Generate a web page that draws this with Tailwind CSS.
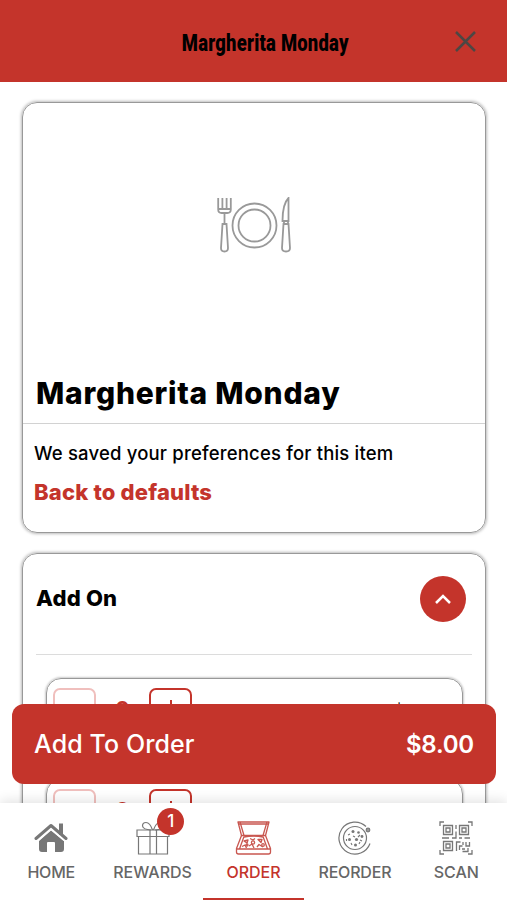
<!DOCTYPE html>
<html lang="en">
  <head>
    <meta charset="UTF-8" />
    <meta name="viewport" content="width=device-width, initial-scale=1.0" />
    <title>Margherita Monday</title>
    <script src="https://cdn.jsdelivr.net/npm/@tailwindcss/browser@4"></script>
  </head>
  <body class="bg-white font-['Inter',sans-serif] text-black">
    <div class="relative h-[900px] w-full overflow-hidden">
      <header class="relative flex h-[82px] items-center justify-center bg-[#c4342b] pl-[23px] pt-[6px]">
        <h1 class="origin-center scale-x-[0.8] whitespace-nowrap font-['Roboto',sans-serif] text-[23px] font-black tracking-[0.3px]">Margherita Monday</h1>
        <button type="button" aria-label="Close" class="absolute right-[31px] top-[31px] text-[#4d4744]">
          <svg class="size-[21px]" viewBox="0 0 21 21" fill="none" stroke="currentColor" stroke-width="2.500">
            <path d="M1 1l19 19M20 1L1 20" />
          </svg>
        </button>
      </header>

      <main class="flex flex-col gap-5 px-[22px] pt-5 pr-[21px]">
        <section class="h-[431px] rounded-[15px] border border-[#999] shadow-[0_0_3px_1px_#bbb]">
          <div class="flex h-[260px] items-center justify-center pl-[2px]">
            <svg class="mt-[-17px] h-[56px] w-[76px]" viewBox="0 0 76 56" fill="none" stroke="#999" stroke-width="1.8">
              <circle cx="37.500" cy="28.500" r="22" />
              <circle cx="37.500" cy="28.500" r="16" />
              <path d="M1.200 1v11.500q0 3.500 3.500 3.500h5.600q3.500 0 3.500-3.500V1M5.400 1v11M9.600 1v11M1.200 12h12.600M7.500 16v10.500M5.500 27h4l1.500 24q0 3.500-3.500 3.500T4 51z" />
              <path d="M71.500 24V1q-6 6-6 23zM67 24v3M71 24v3M66.500 27h5l1.500 24q0 3.500-4 3.500T65 51z" />
            </svg>
          </div>
          <div class="flex h-[61px] items-center border-b border-[#d2d2d2] pl-[13px]">
            <h2 class="whitespace-nowrap text-[30px] font-extrabold tracking-[0.75px]">Margherita Monday</h2>
          </div>
          <div class="flex flex-col items-start gap-[11px] pl-[11px] pt-[15px]">
            <p class="whitespace-nowrap text-[18.500px] font-medium leading-7 tracking-[0.18px]">We saved your preferences for this item</p>
            <button type="button" class="whitespace-nowrap text-[22px] font-extrabold leading-7 tracking-[0.18px] text-[#c4342b]">Back to defaults</button>
          </div>
        </section>

        <section class="h-[400px] rounded-[15px] border border-[#999] px-[13px] shadow-[0_0_3px_1px_#bbb]">
          <div class="flex h-[101px] items-center justify-between border-b border-[#dcdcdc] pb-[11px] pr-[6px]">
            <h3 class="whitespace-nowrap text-[22px] font-extrabold tracking-[0.2px]">Add On</h3>
            <button type="button" aria-label="Collapse" class="flex size-[46px] items-center justify-center rounded-full bg-[#c4342b]">
              <svg class="h-[10px] w-4" viewBox="0 0 16 10" fill="none" stroke="#fff" stroke-width="2.500">
                <path d="M1 9l7-7 7 7" />
              </svg>
            </button>
          </div>
          <div class="flex flex-col gap-[11px] pl-[10px] pr-[9px] pt-[23px]">
            <div class="flex h-[90px] items-start rounded-[15px] border border-[#999] px-[6px] pt-[9px] shadow-[0_0_2px_1px_#ccc]">
              <span class="size-[43px] rounded-[7px] border-2 border-[#f0bfbd]"></span>
              <span class="w-[53px] pt-[7px] text-center text-[22px] font-bold leading-7 text-[#c4342b]">0</span>
              <span class="flex size-[43px] items-center justify-center rounded-[7px] border-2 border-[#c4342b]">
                <svg class="h-5 w-5" viewBox="0 0 20 20" stroke="#c4342b" stroke-width="2"><path d="M10 0v20M0 10h20" /></svg>
              </span>
              <span class="ml-auto mr-[51px] pt-[12px] text-[18px] font-medium leading-6">$</span>
            </div>
            <div class="flex h-[90px] items-start rounded-[15px] border border-[#999] px-[6px] pt-[9px] shadow-[0_0_2px_1px_#ccc]">
              <span class="size-[43px] rounded-[7px] border-2 border-[#f0bfbd]"></span>
              <span class="w-[53px] pt-[7px] text-center text-[22px] font-bold leading-7 text-[#c4342b]">0</span>
              <span class="flex size-[43px] items-center justify-center rounded-[7px] border-2 border-[#c4342b]">
                <svg class="h-5 w-5" viewBox="0 0 20 20" stroke="#c4342b" stroke-width="2"><path d="M10 0v20M0 10h20" /></svg>
              </span>
            </div>
          </div>
        </section>
      </main>

      <!-- add to order bar -->
      <button type="button" class="absolute left-3 right-[11px] top-[704px] flex h-[80px] items-center justify-between rounded-xl bg-[#c4342b] pl-[22px] pr-[22px] pt-[2px] text-[25px] font-medium text-white">
        <span class="whitespace-nowrap tracking-[0.1px]">Add To Order</span>
        <span class="whitespace-nowrap text-[24px] font-semibold tracking-[-0.2px]">$8.00</span>
      </button>

      <!-- bottom nav -->
      <nav class="absolute inset-x-0 bottom-0 grid h-[97px] grid-cols-5 bg-white text-[16px] font-medium text-[#666] shadow-[0_-2px_12px_rgba(0,0,0,0.12)]">
        <a class="flex flex-col items-center gap-[5px] pl-px pt-[18px]">
          <svg class="size-[34px]" viewBox="0 0 34 34" fill="#777">
            <path d="M25 2.500h4V14h-4z" />
            <path d="M17 9.500L30 20V28q0 3-3 3h-6v-9q0-1-1-1h-6q-1 0-1 1v9H8q-3 0-3-3v-8z" />
            <path d="M2 17.500L17 4.500l15 13" fill="none" stroke="#777" stroke-width="3" stroke-linecap="round" stroke-linejoin="round" />
            <path d="M4 19.500L17 8.300l13 11.200" fill="none" stroke="#fff" stroke-width="1.200" />
          </svg>
          <span class="tracking-[-0.2px]">HOME</span>
        </a>
        <a class="relative flex flex-col items-center gap-[5px] pl-px pt-[18px]">
          <svg class="size-[34px]" viewBox="0 0 34 34" fill="none" stroke="#777" stroke-width="1.200">
            <path d="M1 9h32v6.500H1zM2.500 15.500h29V33h-29zM14 9h6.500v24H14z" />
            <path d="M15 9Q7 8.500 6.500 5q0-3.500 3.500-3.500 4 0 6.500 7.500M19 9q8-.5 8.500-4 0-3.500-3.500-3.500-4 0-6.500 7.500" />
          </svg>
          <span>REWARDS</span>
          <span class="absolute left-[56px] top-[5px] flex size-[27px] items-center justify-center rounded-full bg-[#c4342b] text-[17px] leading-none text-white">1</span>
        </a>
        <a class="flex flex-col items-center gap-[5px] border-b-2 border-[#c4342b] pt-[18px] text-[#c4342b]">
          <svg class="h-[34px] w-[37px]" viewBox="0 0 37 34" fill="none" stroke="#c95750" stroke-width="1.300" stroke-linejoin="round">
            <path d="M3 1h31l-3.500 13.500h-24zM3 3h31M5 1l4 13.500M32 1l-4 13.500" />
            <path d="M6.500 14.500L1.500 27.500V31q0 2 2 2h30q2 0 2-2v-3.500l-5-13M1.500 28h34M9 15.500L4.500 28M28 15.500L32.500 28M9 16q9.500-2 19 0" />
            <path d="M9 20l4-1-1 3zM15 17.500l3 1.500 2-1.500M23 18.500h4l-1 3zM7 25.500l3-1.500 1.500 3M14 25l3-2 2 4M22 26l2-2.500 4 2.500" />
            <circle cx="18" cy="21.500" r="1.600" /><circle cx="28" cy="24" r="1.300" /><circle cx="12" cy="24" r="1" />
          </svg>
          <span>ORDER</span>
        </a>
        <a class="flex flex-col items-center gap-[5px] pt-[18px]">
          <svg class="size-[34px]" viewBox="0 0 34 34" fill="none" stroke="#777" stroke-width="1.200">
            <path d="M32 22.500A16 16 0 1 1 28 5.500" />
            <circle cx="30" cy="9" r="1.800" fill="#999" />
            <circle cx="17" cy="17" r="11.500" />
            <g fill="#777" stroke="none">
              <circle cx="15" cy="10.500" r="1.500" /><circle cx="20.500" cy="11.500" r="1.300" /><circle cx="24" cy="15.500" r="1.400" />
              <circle cx="11.500" cy="18.500" r="1.500" /><circle cx="18.500" cy="18.500" r="1.600" /><circle cx="17.500" cy="24" r="1.500" />
            </g>
            <path d="M10 14l2-1M15 15l2 1M20 16l2-2M22 19l2 1M21 23l1-2M13 22l1 2M8.500 18v2" stroke-width="1.100" />
          </svg>
          <span class="tracking-[-0.2px]">REORDER</span>
        </a>
        <a class="flex flex-col items-center gap-[5px] pt-[18px]">
          <svg class="size-[34px]" viewBox="0 0 34 34" fill="none" stroke="#777" stroke-width="1.300">
            <path d="M1 5V1h4M29 1h4v4M33 29v4h-4M5 33H1v-4" />
            <path d="M4.500 4.500h9v9h-9zM7 7h4v4H7zM20.500 4.500h9v9h-9zM23 7h4v4h-4zM4.500 20.500h9v9h-9zM7 23h4v4H7z" />
            <path d="M17 4v4M17 10.500v6.500h-4M3 17h7M20 17h3M25.500 17H31M17.500 30V21h4M20.500 29v-4h3M24 21v3M27 21v4h3.500v-4M23 28h3M29 27v3.500h-5.500" />
          </svg>
          <span>SCAN</span>
        </a>
      </nav>
    </div>
  </body>
</html>
